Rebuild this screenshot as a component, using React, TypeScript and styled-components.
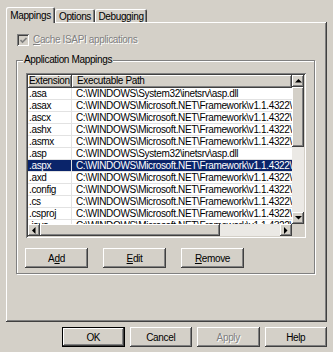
import React from "react";
import styled, { createGlobalStyle, css } from "styled-components";

const GlobalStyle = createGlobalStyle`
  html, body { margin: 0; padding: 0; background: #d4d0c8; }
  body {
    width: 333px; height: 352px; overflow: hidden;
    font-family: "Liberation Sans", Arial, sans-serif;
    font-size: 10px; letter-spacing: -0.35px; color: #000;
  }
  * { box-sizing: border-box; }
`;

const raised = css`
  background: #d4d0c8;
  box-shadow: inset -1px -1px #404040, inset 1px 1px #fff, inset -2px -2px #808080, inset 2px 2px #d4d0c8;
`;

const Window = styled.div`
  padding: 7px 6px 0 6px;
  display: flex;
  flex-direction: column;
`;

const TabStrip = styled.div`
  display: flex;
  align-items: flex-end;
  height: 16px;
  margin-bottom: -1px;
  position: relative;
  z-index: 1;
`;

const Tab = styled.div<{ $active?: boolean; $w: number }>`
  width: ${(p) => p.$w}px;
  height: ${(p) => (p.$active ? 16 : 13)}px;
  margin-bottom: ${(p) => (p.$active ? 0 : 1)}px;
  background: #d4d0c8;
  border-radius: 2px 2px 0 0;
  box-shadow: inset 1px 1px #fff, inset -1px 0 #404040, inset -2px 0 #808080;
  display: flex;
  align-items: center;
  justify-content: center;
  padding-top: ${(p) => (p.$active ? 0 : 1)}px;
`;

const Panel = styled.div`
  width: 321px;
  height: 300px;
  background: #d4d0c8;
  box-shadow: inset -1px -1px #404040, inset 1px 1px #fff, inset -2px -2px #808080;
  padding: 12px 0 0 10px;
  display: flex;
  flex-direction: column;
`;

const CheckRow = styled.div`
  display: flex;
  align-items: center;
  gap: 4px;
  height: 12px;
  margin-left: 1px;
`;

const CheckBox = styled.div`
  width: 12px;
  height: 12px;
  background: #d4d0c8;
  box-shadow: inset 1px 1px #808080, inset -1px -1px #fff, inset 2px 2px #404040, inset -2px -2px #d4d0c8;
  display: flex;
  align-items: center;
  justify-content: center;
`;

const DisabledText = styled.span`
  color: #808080;
  text-shadow: 1px 1px 0 #fff;
  line-height: 12px;
`;

const U = styled.span`
  text-decoration: underline;
`;

const GroupBox = styled.div`
  position: relative;
  margin-top: 14px;
  width: 299px;
  height: 214px;
  border: 1px solid #808080;
  box-shadow: inset 1px 1px #fff, 1px 1px #fff;
  padding: 12px 0 0 8px;
  display: flex;
  flex-direction: column;
`;

const Legend = styled.span`
  position: absolute;
  top: -7px;
  left: 6px;
  padding: 0 1px;
  line-height: 12px;
  background: #d4d0c8;
`;

const ListView = styled.div`
  margin-left: 1px;
  width: 280px;
  height: 165px;
  background: #fff;
  box-shadow: inset 1px 1px #808080, inset -1px -1px #fff, inset 2px 2px #404040, inset -2px -2px #d4d0c8;
  padding: 2px;
  display: grid;
  grid-template-columns: 264px 12px;
  grid-template-rows: 149px 12px;
`;

const ListContent = styled.div`
  overflow: hidden;
  display: flex;
  flex-direction: column;
`;

const HeaderRow = styled.div`
  display: flex;
  height: 13px;
  flex: none;
`;

const HeaderCell = styled.div<{ $w?: number }>`
  background: #d4d0c8;
  box-shadow: inset -1px -1px #404040, inset 1px 1px #fff, inset -2px -2px #808080;
  width: ${(p) => (p.$w ? `${p.$w}px` : "auto")};
  flex: ${(p) => (p.$w ? "none" : "1")};
  line-height: 12px;
  padding-left: ${(p) => (p.$w ? 1 : 5)}px;
  white-space: nowrap;
  overflow: hidden;
`;

const Row = styled.div<{ $sel?: boolean }>`
  display: flex;
  height: 12px;
  flex: none;
  border-bottom: 1px solid #e2e2e2;
  background: ${(p) => (p.$sel ? "#0a246a" : "#fff")};
  color: ${(p) => (p.$sel ? "#fff" : "#000")};
`;

const Cell = styled.div<{ $w?: number }>`
  width: ${(p) => (p.$w ? `${p.$w}px` : "auto")};
  flex: ${(p) => (p.$w ? "none" : "1")};
  border-right: ${(p) => (p.$w ? "1px solid #e2e2e2" : "none")};
  line-height: 11px;
  padding-left: ${(p) => (p.$w ? 1 : 4)}px;
  white-space: nowrap;
  overflow: hidden;
`;

const VScroll = styled.div`
  display: flex;
  flex-direction: column;
`;

const HScroll = styled.div`
  display: flex;
`;

const ArrowBtn = styled.div`
  ${raised};
  width: 12px;
  height: 12px;
  flex: none;
  display: flex;
  align-items: center;
  justify-content: center;
`;

const Thumb = styled.div<{ $len: number; $vertical?: boolean }>`
  ${raised};
  flex: none;
  ${(p) => (p.$vertical ? `height: ${p.$len}px;` : `width: ${p.$len}px;`)}
`;

const Track = styled.div`
  flex: 1;
  background: #ebe9e5;
`;

const Corner = styled.div`
  background: #d4d0c8;
`;

const ButtonRow = styled.div<{ $gap: number }>`
  display: flex;
  gap: ${(p) => p.$gap}px;
`;

const Button = styled.div<{ $default?: boolean; $disabled?: boolean }>`
  width: 63px;
  height: 20px;
  background: #d4d0c8;
  display: flex;
  align-items: center;
  justify-content: center;
  color: ${(p) => (p.$disabled ? "#808080" : "#000")};
  text-shadow: ${(p) => (p.$disabled ? "1px 1px 0 #fff" : "none")};
  box-shadow: ${(p) =>
    p.$default
      ? "inset -1px -1px #000, inset 1px 1px #000, inset -2px -2px #404040, inset 2px 2px #fff, inset -3px -3px #808080"
      : "inset -1px -1px #404040, inset 1px 1px #fff, inset -2px -2px #808080, inset 2px 2px #d4d0c8"};
`;

const GroupButtons = styled(ButtonRow)`
  margin-top: 10px;
`;

const DialogButtons = styled(ButtonRow)`
  margin-top: 5px;
  padding-left: 56px;
`;

type Dir = "up" | "down" | "left" | "right";
const Arrow = ({ dir }: { dir: Dir }) => {
  const pts: Record<Dir, string> = {
    up: "3.5,0 0,3.5 7,3.5",
    down: "0,0 7,0 3.5,3.5",
    left: "3.5,0 3.5,7 0,3.5",
    right: "0,0 0,7 3.5,3.5",
  };
  const vertical = dir === "up" || dir === "down";
  return (
    <svg width={vertical ? 7 : 4} height={vertical ? 4 : 7} viewBox={vertical ? "0 0 7 4" : "0 0 4 7"}>
      <polygon points={pts[dir]} fill="#000" />
    </svg>
  );
};

const SYS = "C:\\WINDOWS\\System32\\inetsrv\\asp.dll";
const NET = "C:\\WINDOWS\\Microsoft.NET\\Framework\\v1.1.4322\\aspnet_isapi.dll";

const rows: { ext: string; path: string; sel?: boolean }[] = [
  { ext: ".asa", path: SYS },
  { ext: ".asax", path: NET },
  { ext: ".ascx", path: NET },
  { ext: ".ashx", path: NET },
  { ext: ".asmx", path: NET },
  { ext: ".asp", path: SYS },
  { ext: ".aspx", path: NET, sel: true },
  { ext: ".axd", path: NET },
  { ext: ".config", path: NET },
  { ext: ".cs", path: NET },
  { ext: ".csproj", path: NET },
  { ext: ".java", path: NET },
];

export default function App() {
  return (
    <>
      <GlobalStyle />
      <Window>
        <TabStrip>
          <Tab $active $w={49}>Mappings</Tab>
          <Tab $w={40}>Options</Tab>
          <Tab $w={52}>Debugging</Tab>
        </TabStrip>
        <Panel>
          <CheckRow>
            <CheckBox>
              <svg width="7" height="7" viewBox="0 0 7 7">
                <polyline points="0.5,3 2.5,5 6.5,1" fill="none" stroke="#808080" strokeWidth="1.6" />
              </svg>
            </CheckBox>
            <DisabledText>
              <U>C</U>ache ISAPI applications
            </DisabledText>
          </CheckRow>
          <GroupBox>
            <Legend>Application Mappings</Legend>
            <ListView>
              <ListContent>
                <HeaderRow>
                  <HeaderCell $w={44}>Extension</HeaderCell>
                  <HeaderCell>Executable Path</HeaderCell>
                </HeaderRow>
                {rows.map((r) => (
                  <Row key={r.ext} $sel={r.sel}>
                    <Cell $w={44}>{r.ext}</Cell>
                    <Cell>{r.path}</Cell>
                  </Row>
                ))}
              </ListContent>
              <VScroll>
                <ArrowBtn><Arrow dir="up" /></ArrowBtn>
                <Thumb $vertical $len={60} />
                <Track />
                <ArrowBtn><Arrow dir="down" /></ArrowBtn>
              </VScroll>
              <HScroll>
                <ArrowBtn><Arrow dir="left" /></ArrowBtn>
                <Thumb $len={180} />
                <Track />
                <ArrowBtn><Arrow dir="right" /></ArrowBtn>
              </HScroll>
              <Corner />
            </ListView>
            <GroupButtons $gap={15}>
              <Button>A<U>d</U>d</Button>
              <Button><U>E</U>dit</Button>
              <Button><U>R</U>emove</Button>
            </GroupButtons>
          </GroupBox>
        </Panel>
        <DialogButtons $gap={5}>
          <Button $default>OK</Button>
          <Button>Cancel</Button>
          <Button $disabled>Apply</Button>
          <Button>Help</Button>
        </DialogButtons>
      </Window>
    </>
  );
}
